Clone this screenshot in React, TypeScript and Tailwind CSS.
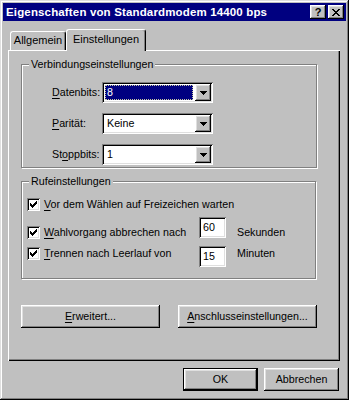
import React from "react";

const raised =
  "shadow-[inset_-1px_-1px_#000,inset_1px_1px_#fff,inset_-2px_-2px_#808080,inset_2px_2px_#dfdfdf]";
const sunken =
  "shadow-[inset_1px_1px_#808080,inset_-1px_-1px_#fff,inset_2px_2px_#000,inset_-2px_-2px_#dfdfdf]";

function Key({ children }: { children: React.ReactNode }) {
  return <span className="underline underline-offset-[2px] decoration-1">{children}</span>;
}

function Combo({ value, selected }: { value: string; selected?: boolean }) {
  return (
    <div className={`flex h-[21px] w-[111px] bg-white p-[2px] ${sunken}`}>
      <div className="flex flex-1 items-center pl-[1px] pr-[2px]">
        {selected ? (
          <div className="flex h-[15px] flex-1 items-center border border-dotted border-[#c8c8a0] bg-[#000080] pl-[1px] text-white">
            {value}
          </div>
        ) : (
          <span className="pl-[2px]">{value}</span>
        )}
      </div>
      <div className={`flex h-[17px] w-[16px] items-center justify-center bg-[#c0c0c0] ${raised}`}>
        <svg width="7" height="4" viewBox="0 0 7 4">
          <path d="M0 0h7v1h-1v1h-1v1h-1v1h-1v-1h-1v-1h-1v-1h-1z" fill="#000" />
        </svg>
      </div>
    </div>
  );
}

function Check() {
  return (
    <div className={`flex h-[13px] w-[13px] shrink-0 items-center justify-center bg-white ${sunken}`}>
      <svg width="7" height="7" viewBox="0 0 7 7">
        <path
          d="M0 2h1v1h1v1h1v-1h1v-1h1v-1h1v-1h1v3h-1v1h-1v1h-1v1h-1v1h-1v-1h-1v-1h-1z"
          fill="#000"
        />
      </svg>
    </div>
  );
}

function Edit({ value }: { value: string }) {
  return (
    <div className={`flex h-[21px] w-[27px] items-center bg-white pl-[4px] ${sunken}`}>{value}</div>
  );
}

function Button({ children, w, isDefault }: { children: React.ReactNode; w: string; isDefault?: boolean }) {
  return (
    <div
      className={`flex h-[23px] items-center justify-center bg-[#c0c0c0] ${w} ${
        isDefault ? "border border-black" : ""
      }`}
    >
      <div className={`flex h-full w-full items-center justify-center ${raised}`}>{children}</div>
    </div>
  );
}

function Group({
  label,
  className,
  children,
}: {
  label: string;
  className: string;
  children: React.ReactNode;
}) {
  return (
    <div
      className={`relative border border-[#808080] shadow-[1px_1px_0_#fff,inset_1px_1px_0_#fff] ${className}`}
    >
      <span className="absolute -top-[8px] left-[7px] bg-[#c0c0c0] px-[2px] leading-[14px]">{label}</span>
      {children}
    </div>
  );
}

export default function App() {
  return (
    <div
      className="flex h-[400px] w-[349px] flex-col bg-[#c0c0c0] p-[3px] text-[10.7px] leading-[13px] text-black shadow-[inset_-1px_-1px_#000,inset_1px_1px_#dfdfdf,inset_-2px_-2px_#808080,inset_2px_2px_#fff]"
      style={{ fontFamily: '"Liberation Sans", Arial, sans-serif' }}
    >
      {/* title bar */}
      <div className="flex h-[18px] shrink-0 items-center bg-[#000080] pl-[3px] pr-[2px]">
        <span className="flex-1 text-[11.5px] font-bold tracking-[0.15px] text-white">
          Eigenschaften von Standardmodem 14400 bps
        </span>
        <div className={`flex h-[14px] w-[16px] items-center justify-center bg-[#c0c0c0] ${raised}`}>
          <span className="text-[11px] font-bold leading-none">?</span>
        </div>
        <div className={`ml-[2px] flex h-[14px] w-[16px] items-center justify-center bg-[#c0c0c0] ${raised}`}>
          <svg width="8" height="7" viewBox="0 0 8 7">
            <path
              d="M0 0h2v1h1v1h2v-1h1v-1h2v1h-1v1h-1v1h-1v1h1v1h1v1h1v1h-2v-1h-1v-1h-2v1h-1v1h-2v-1h1v-1h1v-1h1v-1h-1v-1h-1v-1h-1z"
              fill="#000"
            />
          </svg>
        </div>
      </div>

      {/* tabs */}
      <div className="flex flex-col pl-[5px] pt-[8px]">
        <div className="relative z-10 flex h-[21px] items-end pl-[2px]">
          <div className="flex h-[19px] w-[56px] items-center justify-center rounded-t-[3px] border-l border-t border-r border-l-white border-t-white border-r-black pb-[1px] text-[11px] shadow-[inset_-1px_0_#808080]">
            Allgemein
          </div>
          <div className="-mb-[1px] flex h-[22px] w-[80px] items-center justify-center rounded-t-[3px] border-l border-t border-r border-l-white border-t-white border-r-black bg-[#c0c0c0] pb-[2px] text-[11px] shadow-[inset_-1px_0_#808080]">
            Einstellungen
          </div>
        </div>

        {/* panel */}
        <div className="flex h-[311px] w-[332px] flex-col pl-[13px] pt-[14px] shadow-[inset_1px_1px_#fff,inset_-1px_-1px_#000,inset_-2px_-2px_#808080]">
          <Group label="Verbindungseinstellungen" className="h-[104px] w-[296px]">
            <div className="flex flex-col gap-[10px] pl-[30px] pt-[17px]">
              <div className="flex items-center">
                <span className="w-[50px]">
                  <Key>D</Key>atenbits:
                </span>
                <Combo value="8" selected />
              </div>
              <div className="flex items-center">
                <span className="w-[50px]">
                  <Key>P</Key>arität:
                </span>
                <Combo value="Keine" />
              </div>
              <div className="flex items-center">
                <span className="w-[50px]">
                  St<Key>o</Key>ppbits:
                </span>
                <Combo value="1" />
              </div>
            </div>
          </Group>

          <Group label="Rufeinstellungen" className="mt-[13px] h-[98px] w-[295px]">
            <div className="flex flex-col pl-[5px] pt-[16px]">
              <div className="flex h-[13px] items-center gap-[4px]">
                <Check />
                <span>
                  <Key>V</Key>or dem Wählen auf Freizeichen warten
                </span>
              </div>
              <div className="mt-[6px] flex h-[21px]">
                <div className="flex w-[172px] items-center gap-[4px] pt-[9px]">
                  <Check />
                  <span>
                    <Key>W</Key>ahlvorgang abbrechen nach
                  </span>
                </div>
                <Edit value="60" />
                <span className="ml-[11px] pt-[9px]">Sekunden</span>
              </div>
              <div className="mt-[8px] flex h-[21px]">
                <div className="flex w-[172px] items-center gap-[4px] self-start pt-[1px]">
                  <Check />
                  <span>
                    <Key>T</Key>rennen nach Leerlauf von
                  </span>
                </div>
                <Edit value="15" />
                <span className="ml-[11px] pt-[1px]">Minuten</span>
              </div>
            </div>
          </Group>

          <div className="mt-[26px] flex gap-[18px]">
            <Button w="w-[139px]">
              <span>
                <Key>E</Key>rweitert...
              </span>
            </Button>
            <Button w="w-[139px]">
              <span>
                <Key>A</Key>nschlusseinstellungen...
              </span>
            </Button>
          </div>
        </div>

        {/* dialog buttons */}
        <div className="mt-[7px] flex w-[332px] justify-end gap-[6px] pr-[1px]">
          <Button w="w-[75px]" isDefault>
            OK
          </Button>
          <Button w="w-[75px]">Abbrechen</Button>
        </div>
      </div>
    </div>
  );
}
